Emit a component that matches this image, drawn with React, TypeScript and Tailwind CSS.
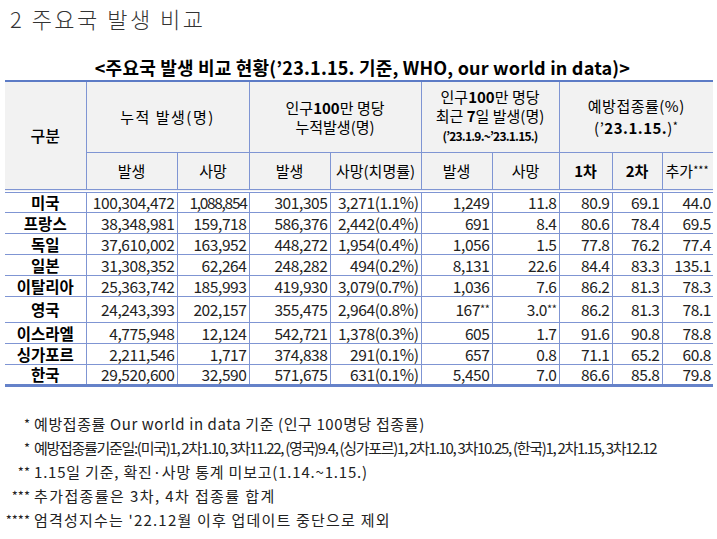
import React from "react";

const rows = [
  ["미국", "100,304,472", "1,088,854", "301,305", "3,271(1.1%)", "1,249", "11.8", "80.9", "69.1", "44.0"],
  ["프랑스", "38,348,981", "159,718", "586,376", "2,442(0.4%)", "691", "8.4", "80.6", "78.4", "69.5"],
  ["독일", "37,610,002", "163,952", "448,272", "1,954(0.4%)", "1,056", "1.5", "77.8", "76.2", "77.4"],
  ["일본", "31,308,352", "62,264", "248,282", "494(0.2%)", "8,131", "22.6", "84.4", "83.3", "135.1"],
  ["이탈리아", "25,363,742", "185,993", "419,930", "3,079(0.7%)", "1,036", "7.6", "86.2", "81.3", "78.3"],
  ["영국", "24,243,393", "202,157", "355,475", "2,964(0.8%)", "167", "3.0", "86.2", "81.3", "78.1"],
  ["이스라엘", "4,775,948", "12,124", "542,721", "1,378(0.3%)", "605", "1.7", "91.6", "90.8", "78.8"],
  ["싱가포르", "2,211,546", "1,717", "374,838", "291(0.1%)", "657", "0.8", "71.1", "65.2", "60.8"],
  ["한국", "29,520,600", "32,590", "571,675", "631(0.1%)", "5,450", "7.0", "86.6", "85.8", "79.8"],
];

const notes = [
  ["*", "예방접종률 Our world in data 기준 (인구 100명당 접종률)", "tracking-[0.6px]"],
  ["*", "예방접종률기준일:(미국)1, 2차1.10, 3차11.22, (영국)9.4, (싱가포르)1, 2차1.10, 3차10.25, (한국)1, 2차1.15, 3차12.12", "tracking-[-1.3px]"],
  ["**", "1.15일 기준, 확진·사망 통계 미보고(1.14.~1.15.)", "tracking-[0.8px]"],
  ["***", "추가접종률은 3차, 4차 접종률 합계", "tracking-[1.4px]"],
  ["****", "엄격성지수는 '22.12월 이후 업데이트 중단으로 제외", "tracking-[1.2px]"],
];

function App() {
  const hd = "bg-[#f2f2f2] border border-[#7f95d3] text-center align-middle text-[15px] leading-[19px]";
  const bot = "border-b-4 border-double";
  return (
    <div className="w-[717px] h-[539px] bg-white text-black overflow-hidden font-['Noto_Sans_CJK_KR',sans-serif]">
      <div className="pl-[10px] pt-[4px] text-[22px] leading-[28px] font-light tracking-[2.5px] text-[#333]">
        2 주요국 발생 비교
      </div>
      <div className="mt-[24px] text-center text-[18px] leading-[22px] font-bold pl-[8px] tracking-[0.2px]">
        &lt;주요국 발생 비교 현황(’23.1.15. 기준, WHO, our world in data)&gt;
      </div>
      <table className="ml-[5px] mt-[2px] w-[708px] table-fixed border-collapse">
        <colgroup>
          <col className="w-[81px]" />
          <col className="w-[91px]" />
          <col className="w-[72px]" />
          <col className="w-[81px]" />
          <col className="w-[91px]" />
          <col className="w-[71px]" />
          <col className="w-[67px]" />
          <col className="w-[53px]" />
          <col className="w-[50px]" />
          <col className="w-[51px]" />
        </colgroup>
        <thead>
          <tr className="h-[71px]">
            <th rowSpan={2} className={`${hd} font-medium text-[16px] border-l-0 border-t-2 border-t-[#5d7cc6] ${bot}`}>
              구분
            </th>
            <th colSpan={2} className={`${hd} font-normal tracking-[1.5px] border-t-2 border-t-[#5d7cc6]`}>
              누적 발생(명)
            </th>
            <th colSpan={2} className={`${hd} font-normal border-t-2 border-t-[#5d7cc6]`}>
              인구<b>100</b>만 명당
              <br />
              누적발생(명)
            </th>
            <th colSpan={2} className={`${hd} font-normal border-t-2 border-t-[#5d7cc6]`}>
              인구<b>100</b>만 명당
              <br />
              최근 <b>7</b>일 발생(명)
              <br />
              <span className="text-[12px] font-bold tracking-[-0.8px] leading-[20px]">(’23.1.9.~’23.1.15.)</span>
            </th>
            <th colSpan={3} className={`${hd} font-normal border-r-0 border-t-2 border-t-[#5d7cc6] leading-[22px] tracking-[0.5px]`}>
              예방접종률(%)
              <br />
              (’<b>23.1.15.</b>)<sup className="text-[11px] relative -top-[4px]">*</sup>
            </th>
          </tr>
          <tr className="h-[39px]">
            <th className={`${hd} font-normal ${bot}`}>발생</th>
            <th className={`${hd} font-normal ${bot}`}>사망</th>
            <th className={`${hd} font-normal ${bot}`}>발생</th>
            <th className={`${hd} font-normal ${bot}`}>사망(치명률)</th>
            <th className={`${hd} font-normal ${bot}`}>발생</th>
            <th className={`${hd} font-normal ${bot}`}>사망</th>
            <th className={`${hd} font-bold ${bot}`}>1차</th>
            <th className={`${hd} font-bold ${bot}`}>2차</th>
            <th className={`${hd} font-normal ${bot} border-r-0 text-left pl-[3px]`}>
              추가<sup className="text-[11px] relative -top-[3px]">***</sup>
            </th>
          </tr>
        </thead>
        <tbody>
          {rows.map((r, i) => {
            const last = i === rows.length - 1;
            const uk = r[0] === "영국";
            return (
              <tr key={r[0]} className={uk ? "h-[26px]" : "h-[21px]"}>
                {r.map((c, j) => (
                  <td
                    key={j}
                    className={
                      "border border-[#7f95d3] p-0 leading-[18px] whitespace-nowrap " +
                      (j === 0
                        ? "border-l-0 text-center font-bold text-[15.5px] "
                        : "text-right pr-[2px] text-[15.5px] text-[#222] " +
                          (j === 2 && i === 0 ? "tracking-[-1.3px] " : "tracking-[-0.4px] ")) +
                      (j === 9 ? "border-r-0 " : "") +
                      (last ? "border-b-[3px] border-b-[#6582c9] " : "")
                    }
                  >
                    {c}
                    {uk && (j === 5 || j === 6) && (
                      <sup className="text-[11px] relative -top-[3px]">**</sup>
                    )}
                  </td>
                ))}
              </tr>
            );
          })}
        </tbody>
      </table>
      <div className="mt-[25px] text-[15px] leading-[24px] text-[#222]">
        {notes.map((n, i) => (
          <div key={i} className="flex whitespace-nowrap">
            <span className="w-[30px] text-right shrink-0 text-[13px]">{n[0]}</span>
            <span className={"ml-[4px] " + n[2]}>{n[1]}</span>
          </div>
        ))}
      </div>
    </div>
  );
}

export default App;
